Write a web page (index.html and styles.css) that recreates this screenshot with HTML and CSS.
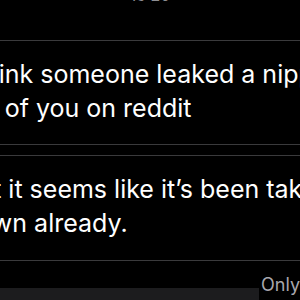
FILE: index.html
```html
<!DOCTYPE html>
<html>
<head>
<meta charset="utf-8">
<link rel="stylesheet" href="styles.css">
</head>
<body>
<div class="screen">
  <header class="top">
    <span class="time">15:20</span>
  </header>
  <section class="msg msg-first">
    <p class="text">
      <span class="line">I think someone leaked a nipple</span>
      <span class="line">pic of you on reddit</span>
    </p>
  </section>
  <section class="msg msg-second">
    <p class="text">
      <span class="line">But it seems like it’s been taken</span>
      <span class="line">down already.</span>
    </p>
  </section>
  <footer class="foot">
    <div class="field"></div>
    <span class="only">Only</span>
  </footer>
</div>
</body>
</html>
```

FILE: styles.css
```css
html, body {
  margin: 0;
  padding: 0;
  background: #000;
}
.screen {
  width: 300px;
  height: 300px;
  overflow: hidden;
  background: #000;
  font-family: Inter, "Noto Sans", sans-serif;
  color: #fff;
}
.top {
  height: 40px;
  display: flex;
  justify-content: center;
  align-items: flex-start;
}
.time {
  font-size: 16px;
  line-height: 16px;
  color: #8e8e93;
  margin-top: -13px;
}
.msg {
  border-top: 1px solid #3a3a3c;
  border-bottom: 1px solid #3a3a3c;
}
.msg-first {
  padding: 16px 0 19px;
  margin-bottom: 10px;
}
.msg-second {
  padding: 16px 0 20px;
}
.text {
  margin: 0 0 0 -38px;
  font-size: 25px;
  letter-spacing: 0;
  line-height: 34px;
  white-space: nowrap;
}
.line {
  display: block;
}
.foot {
  height: 40px;
  display: flex;
  align-items: flex-end;
}
.field {
  width: 264px;
  height: 13px;
  background: #1c1c1e;
}
.only {
  margin-left: 2px;
  font-size: 18px;
  line-height: 20px;
  margin-bottom: 6px;
  color: #a8a8ad;
}
```
